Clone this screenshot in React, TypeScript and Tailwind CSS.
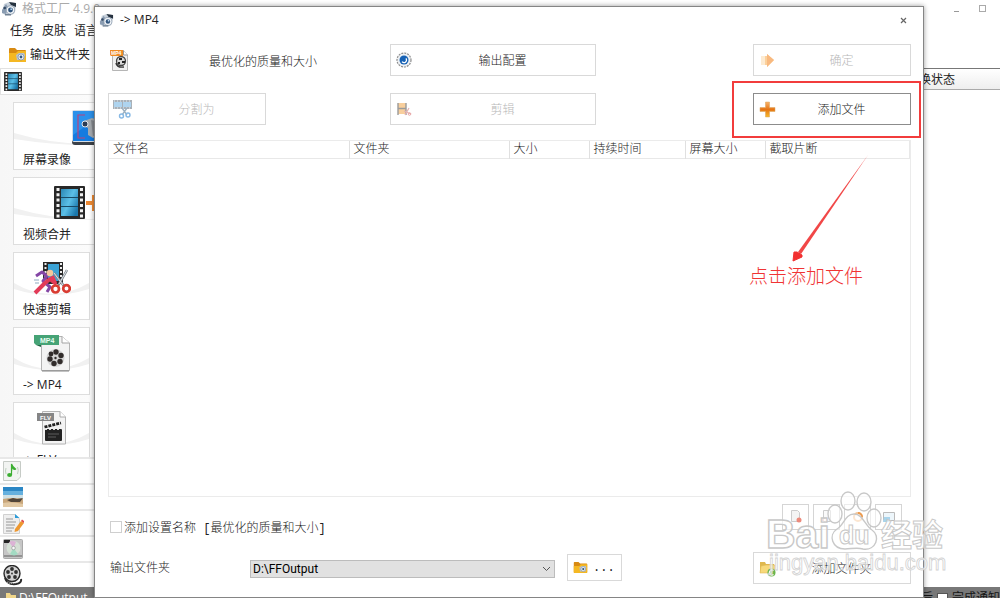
import React from 'react';

interface TileProps {
  label: string;
  wide?: boolean;
  children: React.ReactNode;
}

const uiFont = 'font-["Open_Sans","Noto_Sans_CJK_SC",sans-serif]';
const formFont = 'font-["Liberation_Mono","Noto_Sans_CJK_SC",monospace]';

const AppIcon = ({ size = 16 }: { size?: number }) => (
  <svg width={size} height={size} viewBox="0 0 16 16" aria-hidden="true">
    <path d="M3 3 L8 1 L14 2 L15 5 L13 13 L4 14 L1 12 Z" fill="#c9d2dc" />
    <path d="M1 9 L5 3 L7 6 L5 13 L1 12 Z" fill="#8b9db2" />
    <path d="M8 1 L15 2 L15 6 L10 4 Z" fill="#26323f" />
    <circle cx="9.5" cy="9" r="4.3" fill="#eef2f6" stroke="#8696a8" strokeWidth="0.8" />
    <circle cx="9.5" cy="9" r="2.4" fill="#33577f" />
    <circle cx="10.2" cy="8.2" r="0.9" fill="#b9d5ee" />
    <circle cx="3.7" cy="7" r="1.3" fill="#354b66" />
    <path d="M4 13 h6 v1.5 h-6z" fill="#6f8093" />
  </svg>
);

const FolderIcon = ({ width = 19, height = 16 }: { width?: number; height?: number }) => (
  <svg width={width} height={height} viewBox="0 0 19 16" aria-hidden="true">
    <path d="M1 2 Q1 1 2 1 H7 L9 3 H17 Q18 3 18 4 V14 Q18 15 17 15 H2 Q1 15 1 14Z" fill="#d88a12" />
    <path d="M1 6 H8 L10 4 H18 V14 Q18 15 17 15 H2 Q1 15 1 14Z" fill="#f5b823" />
    <path d="M8 8 L11 6 L16 6 L17 8 L16 13 L9 13Z" fill="#b8c3cf" />
    <circle cx="13" cy="10" r="3" fill="#eef3f8" stroke="#7889a0" strokeWidth="0.7" />
    <circle cx="13" cy="10" r="1.4" fill="#31587f" />
  </svg>
);

const FilmStrip = ({ width, height }: { width: number; height: number }) => (
  <svg width={width} height={height} viewBox="0 0 31 33" aria-hidden="true">
    <defs>
      <linearGradient id="film" x1="0" y1="0" x2="1" y2="0.7">
        <stop offset="0" stopColor="#2b87b5" />
        <stop offset="0.55" stopColor="#5cc0e8" />
        <stop offset="1" stopColor="#1b78ac" />
      </linearGradient>
    </defs>
    <rect width="31" height="33" rx="1" fill="#282828" />
    <rect x="7" y="3" width="17" height="27" fill="url(#film)" />
    <path d="M7 11.5h17M7 20.5h17" stroke="#184b68" strokeWidth="1.2" />
    <path d="M4 2v30M27.5 2v30" stroke="#f2f2f2" strokeWidth="3" strokeDasharray="3 2.3" />
  </svg>
);

const CameraIcon = () => (
  <svg width="38" height="38" viewBox="0 0 38 38" aria-hidden="true">
    <rect x="1" y="2" width="36" height="34" rx="3" fill="#3c4148" />
    <rect x="1" y="1" width="36" height="32" rx="2" fill="#d5dde5" />
    <rect x="2" y="2" width="34" height="30" fill="#147be0" />
    <path d="M2 2 H36 L2 26Z" fill="#3ba0f1" opacity=".6" />
    <path d="M14 6H7v23h7" fill="none" stroke="#b8447f" strokeWidth="1.2" />
    <path d="M13 12 L21 9 L30 12 V25 L22 29 L17 26 V19 L13 17Z" fill="#a5aaaf" />
    <path d="M20 11 L28 13 V25 L22 27Z" fill="#85898e" />
    <circle cx="14" cy="15" r="3" fill="#2b3b53" stroke="#e1e6ec" />
  </svg>
);

const MergeIcon = () => (
  <svg width="73" height="33" viewBox="0 0 73 33" aria-hidden="true">
    <defs>
      <linearGradient id="merge" x1="0" y1="0" x2="1" y2="0.7">
        <stop offset="0" stopColor="#2b87b5" />
        <stop offset="0.55" stopColor="#5cc0e8" />
        <stop offset="1" stopColor="#1b78ac" />
      </linearGradient>
    </defs>
    <rect width="31" height="33" rx="1" fill="#282828" />
    <rect x="7" y="3" width="17" height="27" fill="url(#merge)" />
    <path d="M7 11.5h17M7 20.5h17" stroke="#184b68" strokeWidth="1.2" />
    <path d="M4 2v30M27.5 2v30" stroke="#f2f2f2" strokeWidth="3" strokeDasharray="3 2.3" />
    <path d="M32 15h6V9h5v6h6v4h-6v6h-5v-6h-6z" fill="#ee8a33" />
    <rect x="50" width="23" height="33" fill="#282828" />
  </svg>
);

const ClipIcon = () => (
  <svg width="38" height="34" viewBox="0 0 38 34" aria-hidden="true">
    <rect x="10" y="1" width="20" height="22" fill="#2a2a2a" />
    <rect x="15" y="3" width="11" height="17" fill="#3ba3d6" />
    <path d="M12.5 2v20M28 2v20" stroke="#eee" strokeWidth="2" strokeDasharray="2 2" />
    <path d="M3 15 L9 11 L14 15 L10 20 L17 26 L14 31" fill="none" stroke="#8446a5" strokeWidth="3" strokeLinejoin="round" />
    <path d="M2 32 L12 22 L17 18 L22 22 L19 15" fill="none" stroke="#e23b58" strokeWidth="4" strokeLinejoin="round" />
    <circle cx="17" cy="12" r="3.3" fill="#f4c69c" />
    <path d="M1 19h5M2 22h4" stroke="#8fabc3" strokeWidth="1.2" />
    <path d="M34 9 L25 25M21 12 L31 25" stroke="#7d858d" strokeWidth="2.5" />
    <path d="M34 9 L26 23M21 12l9 12" stroke="#dfe4e8" />
    <circle cx="22.5" cy="28" r="3.5" fill="none" stroke="#d93c32" strokeWidth="2.7" />
    <circle cx="33.5" cy="27.5" r="3.3" fill="none" stroke="#d93c32" strokeWidth="2.7" />
  </svg>
);

const Mp4Icon = () => (
  <svg width="36" height="39" viewBox="0 0 36 39" aria-hidden="true">
    <path d="M7.5 3.5 H28 L35.5 10 V37.5 H7.5Z" fill="#f3f3f3" stroke="#b3b3b3" />
    <path d="M28 3.5V10h7.5" fill="#fff" stroke="#a3a3a3" />
    <path d="M8 38h27" stroke="#858585" />
    <path d="M0 2H25V12H2L0 10Z" fill="#46a376" />
    <path d="M2 12h5v2z" fill="#216443" />
    <text x="6" y="9.5" fontSize="7" fontWeight="700" fill="#e8fff3" fontFamily="Liberation Sans">MP4</text>
    <circle cx="21.5" cy="25" r="9" fill="#d5d5d5" />
    <g fill="#312c2b">
      <circle cx="22" cy="19" r="2.7" />
      <circle cx="27" cy="22.5" r="2.7" />
      <circle cx="26" cy="28.5" r="2.7" />
      <circle cx="20" cy="30.5" r="2.7" />
      <circle cx="16" cy="26" r="2.7" />
      <circle cx="17" cy="21" r="2.4" />
      <circle cx="21.5" cy="25" r="1.2" />
    </g>
  </svg>
);

const FlvIcon = () => (
  <svg width="30" height="35" viewBox="0 0 30 35" aria-hidden="true">
    <path d="M5.5 1.5H23L28.5 7V34H5.5Z" fill="#f3f3f3" stroke="#b5b5b5" />
    <path d="M23 1.5V7h5.5" fill="#fff" stroke="#aaa" />
    <path d="M0 3h17v8H0z" fill="#858585" />
    <text x="3" y="9.5" fontSize="6" fontWeight="700" fill="#fff" fontFamily="Liberation Sans">FLV</text>
    <rect x="8" y="19" width="17" height="12" rx="1" fill="#222" />
    <path d="M7.5 17 L24 13" stroke="#222" strokeWidth="2.8" strokeDasharray="3 1" />
    <path d="M8 19.5h16" stroke="#ddd" strokeDasharray="2 2" />
    <path d="M11 24h11M11 27h8" stroke="#777" strokeWidth=".7" />
  </svg>
);

const MusicIcon = () => (
  <svg width="18" height="20" viewBox="0 0 18 20" aria-hidden="true">
    <path d="M.5.5h17V16L14 19.5H.5Z" fill="#f2f4f2" stroke="#c6cbc6" />
    <path d="M8.5 14V3q1 3 4 5-1 1-3-1" fill="#3cae32" stroke="#3cae32" strokeWidth="1.2" />
    <ellipse cx="6.6" cy="14" rx="2.5" ry="2" fill="#3cae32" />
    <path d="M3 7q-1 3 0 6M14.5 6q1.500 3 0 7" stroke="#c0d2c0" fill="none" />
  </svg>
);

const PhotoIcon = () => (
  <svg width="20" height="20" viewBox="0 0 20 20" aria-hidden="true">
    <rect width="20" height="20" fill="#2c87c5" />
    <path d="M0 4h20v8H0z" fill="#65b0de" />
    <path d="M0 8h20v4H0z" fill="#cfe0e4" />
    <path d="M0 12q10-2 20 0v8H0z" fill="#c9a77c" />
    <path d="M4 13l6-2 4 1 6-1-3 4H8z" fill="#514539" />
    <path d="M0 16q8-2 20 1v3H0z" fill="#e2c9a4" />
  </svg>
);

const DocIcon = () => (
  <svg width="21" height="21" viewBox="0 0 21 21" aria-hidden="true">
    <path d="M.5 1.5H12L16.5 6V20.5H.5Z" fill="#efefef" stroke="#d0d0d0" />
    <path d="M12 1l4.500 4H12z" fill="#2c9bd8" />
    <path d="M3 6h7M3 9h10M3 12h9M3 15h8M3 18h6" stroke="#999" />
    <path d="M12 16l6-8 3 2-6 8-3.500 1z" fill="#ee9830" />
    <path d="M18 8l1-1.500 2 1.500v2z" fill="#df4949" />
  </svg>
);

const DiscIcon = () => (
  <svg width="20" height="20" viewBox="0 0 20 20" aria-hidden="true">
    <rect x=".5" y=".5" width="19" height="19" rx="1" fill="#c6c6c6" stroke="#a9a9a9" />
    <path d="M1 1h6v3H1z" fill="#242424" />
    <path d="M1 17h18" stroke="#939393" strokeWidth="2" />
    <circle cx="10.5" cy="9" r="7" fill="#d5e0d5" />
    <path d="M10.5 9 L6 3 A7 7 0 0 1 13 3Z" fill="#dcb3d5" />
    <path d="M10.5 9 L15 15 A7 7 0 0 1 7 15Z" fill="#a3dbc3" />
    <circle cx="10.5" cy="9" r="1.8" fill="#f8f8f8" stroke="#999" strokeWidth=".7" />
  </svg>
);

const ReelIcon = () => (
  <svg width="20" height="21" viewBox="0 0 20 21" aria-hidden="true">
    <circle cx="9" cy="8.5" r="8" fill="#d2d2d2" stroke="#292929" strokeWidth="1.4" />
    <g fill="#303030">
      <circle cx="9" cy="4" r="1.9" />
      <circle cx="13" cy="7" r="1.9" />
      <circle cx="12" cy="12" r="1.9" />
      <circle cx="6" cy="12" r="1.9" />
      <circle cx="5" cy="7" r="1.9" />
      <circle cx="9" cy="8.5" r=".9" />
    </g>
    <path d="M2 13q2 7 11 6 6-1 5-5" fill="none" stroke="#2b2b2b" strokeWidth="2" />
    <path d="M4 17q5 3 11 0" fill="none" stroke="#ddd" strokeDasharray="1 1" />
  </svg>
);

const ProfileIcon = () => (
  <svg width="19" height="23" viewBox="0 0 19 23" aria-hidden="true">
    <path d="M2.5 1.5h11L17.5 6v15.5h-15z" fill="#f1f1f1" stroke="#b5b5b5" />
    <path d="M13.5 1.5V6h4" fill="#fff" stroke="#999" />
    <path d="M0 1h13v6H1L0 6z" fill="#ef8b25" />
    <text x="1" y="6" fontSize="5" fontWeight="700" fill="#fff" fontFamily="Liberation Sans">MP4</text>
    <circle cx="11" cy="12" r="4.5" fill="#d8d8d8" stroke="#444" strokeWidth="1.3" />
    <path d="M9 9h3v2H9zM12 12h3v2h-3zM8 13h2v2H8z" fill="#222" />
    <path d="M6 14q1 5 8 4" fill="none" stroke="#333" strokeWidth="1.4" />
  </svg>
);

const SplitIcon = () => (
  <svg width="20" height="20" viewBox="0 0 20 20" aria-hidden="true">
    <path d="M1 1h19v9H1z" fill="#a9b1b8" />
    <path d="M2 3h8v5H2zM11 3h8v5h-8z" fill="#aed4ef" />
    <path d="M2 2h17M2 9h17" stroke="#e6edf2" strokeDasharray="1 2" />
    <path d="M10 9l5 7M15 9l-5 7" stroke="#9cb1c1" strokeWidth="1.3" />
    <circle cx="9.5" cy="17" r="2" fill="none" stroke="#86b8e4" strokeWidth="1.4" />
    <circle cx="16" cy="16" r="2" fill="none" stroke="#86b8e4" strokeWidth="1.4" />
  </svg>
);

const GearIcon = () => (
  <svg width="16" height="16" viewBox="0 0 16 16" aria-hidden="true">
    <circle cx="8" cy="8" r="7" fill="#eef1f4" stroke="#8c8c8c" strokeWidth="1.2" strokeDasharray="2 1" />
    <circle cx="8" cy="8" r="4.5" fill="#1762b5" />
    <path d="M8 5.5a2.5 2.5 0 0 0 0 5" fill="none" stroke="#fff" strokeWidth="1.3" transform="rotate(-130 8 8)" />
  </svg>
);

const CutIcon = () => (
  <svg width="15" height="14" viewBox="0 0 15 14" aria-hidden="true">
    <rect x="1" y="1" width="8" height="11" fill="#f8cf9d" />
    <path d="M1 1v12M9 1v12M1 6.5h8" stroke="#9b9b9b" strokeWidth="1.4" />
    <path d="M7 9l7 3M8 13l4-7" stroke="#e3b4b4" strokeWidth="1.3" />
    <circle cx="12.5" cy="12" r="1.3" fill="none" stroke="#e9a9a9" />
  </svg>
);

const ArrowIcon = () => (
  <svg width="15" height="15" viewBox="0 0 15 15" aria-hidden="true">
    <path d="M1 3h6V1l7 6-7 7v-2H1z" fill="#fbd19c" />
    <path d="M7 1l7 6-7 7z" fill="#f8b980" />
    <path d="M1 3h4v9H1z" fill="#fdebd2" />
  </svg>
);

const PlusIcon = () => (
  <svg width="17" height="17" viewBox="0 0 17 17" aria-hidden="true">
    <defs>
      <linearGradient id="plus" x1="0" y1="0" x2="0" y2="1">
        <stop offset="0" stopColor="#f9b26a" />
        <stop offset=".5" stopColor="#e57515" />
        <stop offset="1" stopColor="#f7b92a" />
      </linearGradient>
    </defs>
    <path d="M6.500 1h4v5.500H16v4h-5.500V16h-4v-5.500H1v-4h5.500z" fill="url(#plus)" stroke="#d8a45d" strokeWidth=".5" />
  </svg>
);

const AddFolderIcon = () => (
  <svg width="17" height="17" viewBox="0 0 17 17" aria-hidden="true">
    <path d="M1 2h5l1 2h8v9H1z" fill="#dfb84f" />
    <path d="M2 6l5-1h9l-1 8H1z" fill="#f7d97b" stroke="#e0bb58" strokeWidth=".6" />
    <circle cx="12.5" cy="12.5" r="4" fill="#69b54b" />
    <path d="M14.500 10.500a2.500 2.500 0 1 0 0 4" fill="none" stroke="#fff" strokeWidth="1.3" />
  </svg>
);

const Tile = ({ label, wide = false, children }: TileProps) => (
  <button
    type="button"
    className={`relative flex h-[68px] shrink-0 flex-col overflow-hidden border border-[#dedede] bg-white text-left ${wide ? 'w-[154px]' : 'w-[77px]'}`}
  >
    <svg className="absolute inset-x-0 top-0 h-12 w-full" viewBox="0 0 77 48" preserveAspectRatio="none" aria-hidden="true">
      <path d="M0 30Q38 52 77 30V36Q38 48 0 36Z" fill="#f1f1f1" />
    </svg>
    <span className="relative flex h-[49px] w-full shrink-0 items-center justify-center">{children}</span>
    <span className="relative w-full pl-[9px] text-xs leading-4 text-[#222]">{label}</span>
  </button>
);

interface FormButtonProps {
  label: string;
  icon: React.ReactNode;
  disabled?: boolean;
  active?: boolean;
  className?: string;
}

const FormButton = ({ label, icon, disabled, active, className = '' }: FormButtonProps) => (
  <button
    type="button"
    disabled={disabled}
    className={`flex h-8 items-center border bg-white pr-1 pl-[3px] text-xs font-light ${active ? 'border-[#8c8c8c]' : 'border-[#d9d9d9]'} ${disabled ? 'text-[#b8b8b8]' : 'text-[#222]'} ${className}`}
  >
    <span className="flex w-5 shrink-0 justify-center">{icon}</span>
    <span className="flex-1 pt-[3px] text-center">{label}</span>
  </button>
);

const SmallButton = ({ label, children }: { label: string; children: React.ReactNode }) => (
  <button type="button" aria-label={label} className="flex h-[26px] w-[27px] items-center justify-center border border-[#d5d5d5] bg-white">
    <svg width="14" height="14" viewBox="0 0 14 14" aria-hidden="true">
      {children}
    </svg>
  </button>
);

const Sidebar = () => {
  const tabs = [
    { name: '音频', icon: <MusicIcon /> },
    { name: '图片', icon: <PhotoIcon /> },
    { name: '文档', icon: <DocIcon /> },
    { name: '光驱设备', icon: <DiscIcon /> },
    { name: '工具集', icon: <ReelIcon /> },
  ];

  return (
    <aside className="flex w-[180px] shrink-0 flex-col overflow-hidden">
      <button type="button" aria-label="视频" className="flex h-[27px] shrink-0 items-center border border-[#e2e2e2] bg-white pl-[3px]">
        <FilmStrip width={18} height={19} />
      </button>
      <div className="flex min-h-0 flex-1 flex-col gap-[7px] overflow-hidden bg-linear-to-r from-[#f7f7f7] to-white pt-[7px] pl-[13px]">
        <Tile label="屏幕录像" wide>
          <CameraIcon />
        </Tile>
        <Tile label="视频合并" wide>
          <MergeIcon />
        </Tile>
        <Tile label="快速剪辑">
          <ClipIcon />
        </Tile>
        <Tile label="-> MP4">
          <Mp4Icon />
        </Tile>
        <Tile label="-> FLV">
          <FlvIcon />
        </Tile>
      </div>
      {tabs.map((tab) => (
        <button key={tab.name} type="button" aria-label={tab.name} className="flex h-[26px] shrink-0 items-center border-t-2 border-[#e8e8e8] bg-white pl-[3px]">
          {tab.icon}
        </button>
      ))}
    </aside>
  );
};

const MainWindow = () => (
  <div className={`flex h-full flex-col overflow-hidden bg-white ${uiFont}`}>
    <header className="flex h-[17px] shrink-0 items-center justify-between pr-[14px] pl-px">
      <div className="flex items-center gap-[5px] text-xs text-[#aaa]">
        <AppIcon />
        <span>格式工厂 4.9.0</span>
      </div>
      <div className="flex gap-[20px]">
        <button type="button" aria-label="最小化" className="flex h-[7px] w-[5px] items-end">
          <span className="h-px w-full bg-[#999]" />
        </button>
        <button type="button" aria-label="最大化" className="h-[7px] w-[7px] border border-[#aaa]" />
      </div>
    </header>
    <nav className="flex h-[27px] shrink-0 items-center gap-2 pl-[10px] text-xs text-[#222]">
      <button type="button">任务</button>
      <button type="button">皮肤</button>
      <button type="button">语言</button>
    </nav>
    <div className="flex h-6 shrink-0 items-center pb-[2px] pl-2 text-xs text-[#222]">
      <button type="button" className="flex items-center gap-[3px]">
        <FolderIcon />
        输出文件夹
      </button>
    </div>
    <div className="flex min-h-0 flex-1">
      <Sidebar />
      <section className="flex flex-1 flex-col">
        <div className="flex h-[22px] items-center justify-end border-t border-b border-t-[#777] border-b-[#aaa] bg-linear-to-b from-white to-[#eee] pt-[2px] pr-[45px] text-xs text-[#222]">
          转换状态
        </div>
      </section>
    </div>
    <footer className="flex h-[11px] shrink-0 items-start justify-between overflow-hidden bg-[#787878] pl-[6px] text-xs leading-[21px] text-white">
      <button type="button" className="flex gap-[3px]">
        <svg className="mt-[6px]" width="10" height="9" viewBox="0 0 10 9" aria-hidden="true">
          <path d="M0 0h4l1 2h5v7H0z" fill="#f0d68a" />
        </svg>
        D:\FFOutput
      </button>
      <label className="flex gap-1 text-[#151515]">
        <span>转换完成后</span>
        <input type="checkbox" defaultChecked className="mt-[6px] h-[11px] w-[11px] appearance-none border border-[#555] bg-white" />
        <span>完成通知</span>
      </label>
    </footer>
  </div>
);

const FileTable = () => (
  <div className="mt-[15px] min-h-0 flex-1 border border-[#ebebeb] bg-white">
    <table className="w-full table-fixed border-collapse text-left text-xs font-light text-[#222]">
      <thead>
        <tr className="h-[17px] border-b border-[#e8e8e8] leading-4">
          <th className="w-[240px] border-r border-[#e0e0e0] pt-px pl-1 font-light">文件名</th>
          <th className="w-[160px] border-r border-[#e0e0e0] pt-px pl-1 font-light">文件夹</th>
          <th className="w-[80px] border-r border-[#e0e0e0] pt-px pl-1 font-light">大小</th>
          <th className="w-[96px] border-r border-[#e0e0e0] pt-px pl-1 font-light">持续时间</th>
          <th className="w-[80px] border-r border-[#e0e0e0] pt-px pl-1 font-light">屏幕大小</th>
          <th className="border-r border-[#e8e8e8] pt-px pl-1 font-light">截取片断</th>
        </tr>
      </thead>
      <tbody />
    </table>
  </div>
);

const Footer = () => (
  <div className="flex h-[100px] shrink-0">
    <div className="flex flex-1 flex-col pt-[23px] pl-[2px]">
      <label className="flex h-[14px] items-center gap-[2px] text-xs font-light text-[#222]">
        <input type="checkbox" className="h-3 w-3 appearance-none border border-[#cfcfcf] bg-white" />
        <span className="pt-[3px]">添加设置名称 [最优化的质量和大小]</span>
      </label>
      <div className="mt-5 flex h-[27px] items-center text-xs font-light text-[#222]">
        <label htmlFor="output" className="w-[140px] pt-[3px]">
          输出文件夹
        </label>
        <div className="relative flex-1">
          <select
            id="output"
            className="mt-[2px] block h-[18px] w-full appearance-none border border-[#bcbcbc] bg-[#e1e1e1] pl-[2px] font-[Roboto,sans-serif] text-xs leading-4 font-normal text-black"
          >
            <option>D:\FFOutput</option>
          </select>
          <svg className="pointer-events-none absolute top-[7px] right-1" width="9" height="8" viewBox="0 0 9 8" aria-hidden="true">
            <path d="M1 2l3.500 3.500L8 2" fill="none" stroke="#555" />
          </svg>
        </div>
        <button type="button" className="ml-3 flex h-[27px] w-[55px] items-center gap-[5px] border border-[#d9d9d9] pl-[5px] font-normal">
          <FolderIcon width={15} height={13} />
          ...
        </button>
      </div>
    </div>
    <div className="ml-[131px] flex w-[158px] flex-col gap-[22px] pt-[7px]">
      <div className="flex justify-end gap-1 pr-[9px]">
        <SmallButton label="移除">
          <path d="M2.5.5h6l2 2v9h-8z" fill="#f4f4f4" stroke="#ccc" />
          <circle cx="10" cy="10" r="2.5" fill="#ec8a7c" />
        </SmallButton>
        <SmallButton label="清空列表">
          <path d="M3.5.5h7v11h-7z" fill="#fafafa" stroke="#ccc" />
          <path d="M1 8l4 4M5 8l-4 4" stroke="#e9a39b" />
        </SmallButton>
        <SmallButton label="播放">
          <circle cx="7" cy="7" r="4" fill="#fff" stroke="#f6c79a" strokeWidth="2" />
          <path d="M7 3a4 4 0 0 1 4 4" fill="none" stroke="#ec9a4e" strokeWidth="2" />
        </SmallButton>
        <SmallButton label="信息">
          <path d="M1.5 2.5h11v8h-11z" fill="#edf6fb" stroke="#bbb" />
          <path d="M2 7h6v5H1z" fill="#a8d4ec" />
        </SmallButton>
      </div>
      <FormButton label="添加文件夹" icon={<AddFolderIcon />} />
    </div>
  </div>
);

const Watermark = () => (
  <svg className="pointer-events-none absolute right-[-25px] bottom-[18px]" width="186" height="90" viewBox="0 0 186 90" aria-label="Baidu 经验 jingyan.baidu.com">
    <g fill="#fff" fillOpacity=".55" stroke="#c8c8c8" strokeWidth="1.4">
      <ellipse cx="73" cy="25" rx="7" ry="9" />
      <ellipse cx="86" cy="12" rx="7" ry="9" />
      <ellipse cx="102" cy="13" rx="7" ry="9" />
      <ellipse cx="112" cy="29" rx="7" ry="9" />
      <path d="M92 25C83 25 82 36 75 40C66 46 70 60 83 60C89 60 95 58 101 60C114 62 119 47 110 41C103 37 101 25 92 25Z" />
    </g>
    <g fill="#fff" fillOpacity=".7" stroke="#c8c8c8" fontWeight="700">
      <text x="4" y="59" fontSize="41" fontFamily="Liberation Sans" strokeWidth="1.4">Bai</text>
      <text x="77" y="55" fontSize="25" fontFamily="Liberation Sans">du</text>
      <text x="119" y="57" fontSize="31" fontFamily="Noto Sans CJK SC">经验</text>
      <text x="7" y="81" fontSize="22" fontFamily="Liberation Sans" fontWeight="400" strokeWidth=".8" stroke="#d2d2d2">jingyan.baidu.com</text>
    </g>
  </svg>
);

const Annotation = () => (
  <>
    <div className="pointer-events-none absolute top-[74px] right-[2px] h-[57px] w-[189px] border-2 border-[#f23c3c]" />
    <div className="pointer-events-none absolute top-[147px] right-[54px] flex w-[120px] flex-col gap-1">
      <svg className="self-end" width="80" height="108" viewBox="0 0 80 108" aria-hidden="true">
        <path d="M79 1L12 100L9 98Z" fill="#f14747" />
        <path d="M4 107L5 98L8 98L13 101L13 103Z" fill="#f23030" stroke="#f23030" />
      </svg>
      <p className="text-[19px] leading-6 font-light whitespace-nowrap text-[#f03434]">点击添加文件</p>
    </div>
  </>
);

const Dialog = () => (
  <div
    role="dialog"
    aria-label="-> MP4"
    className={`absolute top-[6px] right-[76px] bottom-0 left-[94px] flex flex-col border border-[#858585] bg-white pr-3 pl-[13px] shadow-[0_0_5px_rgba(0,0,0,0.4)] ${formFont}`}
  >
    <header className={`-ml-[9px] flex h-[26px] shrink-0 items-center justify-between text-xs text-[#222] ${uiFont}`}>
      <div className="flex items-center gap-[6px]">
        <AppIcon size={15} />
        <span>{'-> MP4'}</span>
      </div>
      <button type="button" aria-label="关闭" className="flex h-4 w-4 items-center justify-center">
        <svg width="7" height="7" viewBox="0 0 7 7" aria-hidden="true">
          <path d="M1 1l5 5M6 1L1 6" stroke="#666" strokeWidth="1.2" />
        </svg>
      </button>
    </header>

    <div className="mt-[11px] grid shrink-0 grid-cols-[282px_1fr_158px] items-center gap-y-[17px]">
      <div className="flex h-8 items-center">
        <span className="w-[101px] pl-[2px]">
          <ProfileIcon />
        </span>
        <span className="pt-[6px] text-xs font-light text-[#222]">最优化的质量和大小</span>
      </div>
      <FormButton label="输出配置" icon={<GearIcon />} className="w-[206px]" />
      <FormButton label="确定" icon={<ArrowIcon />} disabled />
      <FormButton label="分割为" icon={<SplitIcon />} disabled className="w-[158px]" />
      <FormButton label="剪辑" icon={<CutIcon />} disabled className="w-[206px]" />
      <FormButton label="添加文件" icon={<PlusIcon />} active />
    </div>

    <FileTable />
    <Footer />
    <Watermark />
    <Annotation />
  </div>
);

export default function App() {
  return (
    <main className="relative h-screen overflow-hidden bg-white">
      <MainWindow />
      <Dialog />
    </main>
  );
}
